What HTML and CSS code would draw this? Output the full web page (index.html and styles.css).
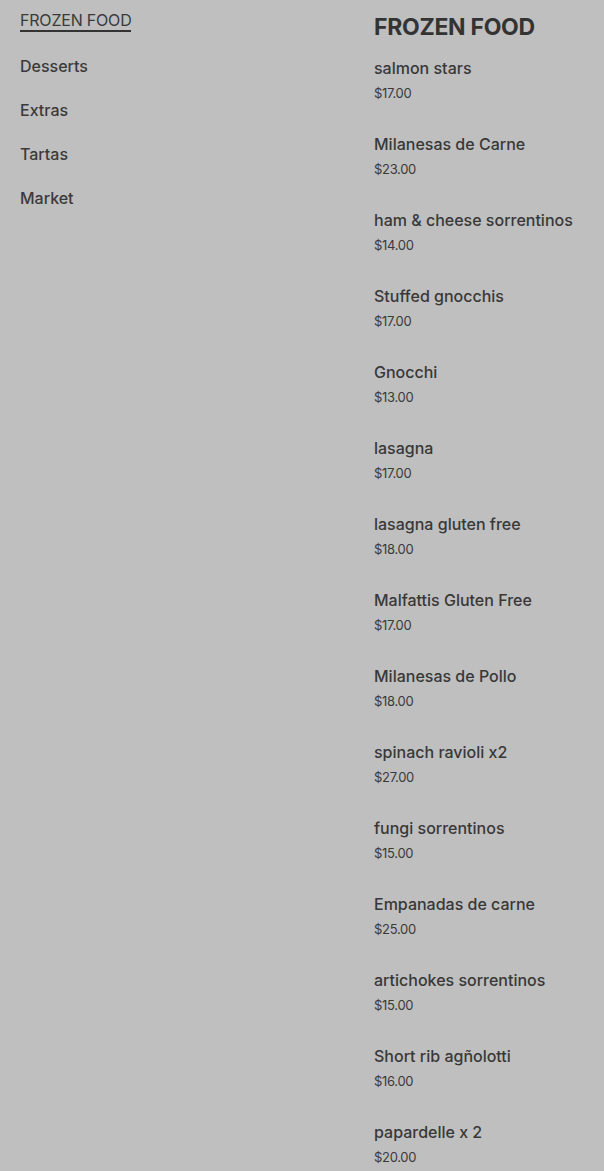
FILE: index.html
```html
<!DOCTYPE html>
<html lang="en">
<head>
<meta charset="utf-8">
<title>Frozen Food</title>
<link rel="stylesheet" href="styles.css">
</head>
<body>
<div class="page">
  <nav class="side">
    <a class="nav-link active">FROZEN FOOD</a>
    <a class="nav-link">Desserts</a>
    <a class="nav-link">Extras</a>
    <a class="nav-link">Tartas</a>
    <a class="nav-link">Market</a>
  </nav>
  <main class="menu">
    <h1 class="title">FROZEN FOOD</h1>
    <ul class="items">
      <li class="item"><span class="name">salmon stars</span><span class="price">$17.00</span></li>
      <li class="item"><span class="name">Milanesas de Carne</span><span class="price">$23.00</span></li>
      <li class="item"><span class="name">ham &amp; cheese sorrentinos</span><span class="price">$14.00</span></li>
      <li class="item"><span class="name">Stuffed gnocchis</span><span class="price">$17.00</span></li>
      <li class="item"><span class="name">Gnocchi</span><span class="price">$13.00</span></li>
      <li class="item"><span class="name">lasagna</span><span class="price">$17.00</span></li>
      <li class="item"><span class="name">lasagna gluten free</span><span class="price">$18.00</span></li>
      <li class="item"><span class="name">Malfattis Gluten Free</span><span class="price">$17.00</span></li>
      <li class="item"><span class="name">Milanesas de Pollo</span><span class="price">$18.00</span></li>
      <li class="item"><span class="name">spinach ravioli x2</span><span class="price">$27.00</span></li>
      <li class="item"><span class="name">fungi sorrentinos</span><span class="price">$15.00</span></li>
      <li class="item"><span class="name">Empanadas de carne</span><span class="price">$25.00</span></li>
      <li class="item"><span class="name">artichokes sorrentinos</span><span class="price">$15.00</span></li>
      <li class="item"><span class="name">Short rib agñolotti</span><span class="price">$16.00</span></li>
      <li class="item"><span class="name">papardelle x 2</span><span class="price">$20.00</span></li>
    </ul>
  </main>
</div>
</body>
</html>
```
FILE: styles.css
```css
html, body {
  margin: 0;
  padding: 0;
  background: #bfbfbf;
  color: #333333;
  font-family: "Inter", "Liberation Sans", sans-serif;
}
.page {
  display: grid;
  grid-template-columns: 354px 1fr;
  padding: 0 20px 0 20px;
}
.side {
  display: flex;
  flex-direction: column;
  gap: 22px;
  padding-top: 10px;
}
.nav-link {
  font-size: 16px;
  line-height: 22px;
  font-weight: 500;
  color: #3a3a3a;
  align-self: flex-start;
}
.nav-link.active {
  font-weight: 400;
  letter-spacing: -0.2px;
  border-bottom: 2px solid #333;
  line-height: 20px;
  margin-bottom: 1px;
}
.menu {
  padding-top: 14px;
}
.title {
  margin: 0;
  font-family: "Inter", sans-serif;
  font-weight: 700;
  font-size: 23px;
  letter-spacing: -0.3px;
  line-height: 26px;
  color: #333;
}
.items {
  list-style: none;
  margin: 0;
  padding: 0;
  display: flex;
  flex-direction: column;
  gap: 30px;
  margin-top: 17px;
}
.item {
  display: flex;
  flex-direction: column;
  gap: 4px;
}
.name {
  font-size: 16px;
  line-height: 22px;
  font-weight: 500;
  color: #383838;
}
.price {
  font-size: 13px;
  line-height: 20px;
  color: #3a3a3a;
  letter-spacing: -0.3px;
}
```
